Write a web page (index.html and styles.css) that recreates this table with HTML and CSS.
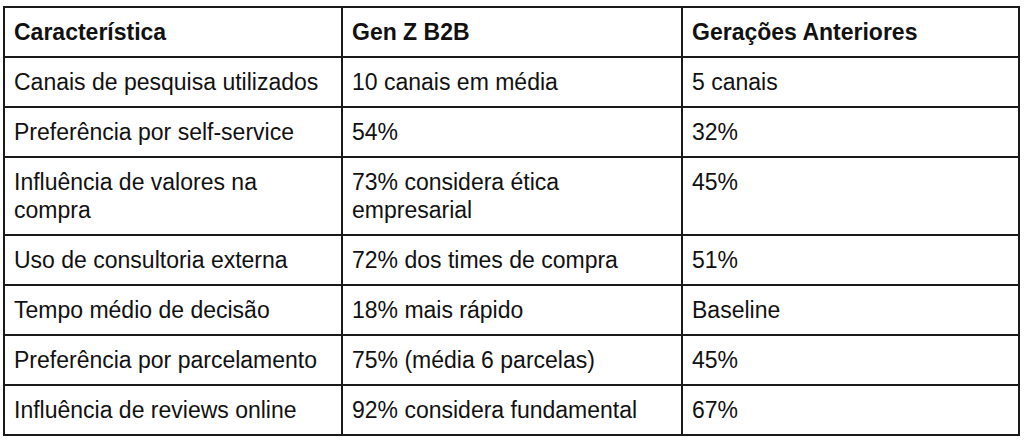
FILE: index.html
```html
<!DOCTYPE html>
<html lang="pt">
<head>
<meta charset="utf-8">
<link rel="stylesheet" href="styles.css">
</head>
<body>
<div class="wrap">
<table class="cmp">
  <colgroup>
    <col class="c1"><col class="c2"><col class="c3">
  </colgroup>
  <thead>
    <tr><th>Característica</th><th>Gen Z B2B</th><th>Gerações Anteriores</th></tr>
  </thead>
  <tbody>
    <tr><td>Canais de pesquisa utilizados</td><td>10 canais em média</td><td>5 canais</td></tr>
    <tr><td>Preferência por self-service</td><td>54%</td><td>32%</td></tr>
    <tr><td>Influência de valores na compra</td><td>73% considera ética empresarial</td><td>45%</td></tr>
    <tr><td>Uso de consultoria externa</td><td>72% dos times de compra</td><td>51%</td></tr>
    <tr><td>Tempo médio de decisão</td><td>18% mais rápido</td><td>Baseline</td></tr>
    <tr><td>Preferência por parcelamento</td><td>75% (média 6 parcelas)</td><td>45%</td></tr>
    <tr><td>Influência de reviews online</td><td>92% considera fundamental</td><td>67%</td></tr>
  </tbody>
</table>
</div>
</body>
</html>
```
FILE: styles.css
```css
html, body {
  margin: 0;
  padding: 0;
  background: #fff;
}
.wrap {
  padding: 6px 4px 0 3px;
}
.cmp {
  width: 1017px;
  table-layout: fixed;
  border-collapse: separate;
  border-spacing: 0;
  border-top: 2px solid #1a1a1a;
  border-left: 2px solid #1a1a1a;
  font-family: "Liberation Sans", Arial, sans-serif;
  font-size: 23px;
  line-height: 28px;
  color: #111;
}
.c1 { width: 338px; }
.c2 { width: 340px; }
.c3 { width: 337px; }
.cmp th,
.cmp td {
  border-right: 2px solid #1a1a1a;
  border-bottom: 2px solid #1a1a1a;
  padding: 10px 10px 10px 9px;
  text-align: left;
  vertical-align: top;
}
.cmp th {
  font-weight: bold;
}
```
